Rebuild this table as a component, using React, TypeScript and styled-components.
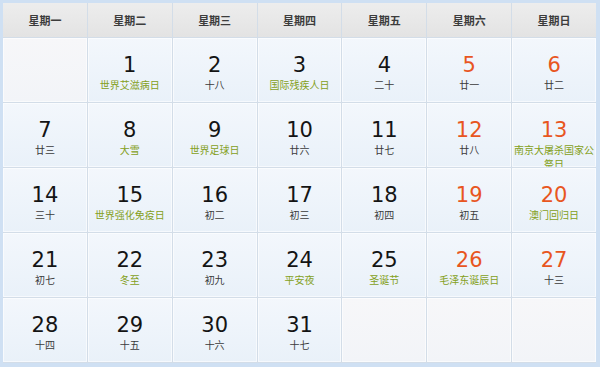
import styled, { createGlobalStyle } from 'styled-components';

const GlobalStyle = createGlobalStyle`
  html, body {
    margin: 0;
    padding: 0;
    background: #ffffff;
  }
  body {
    font-family: "Noto Sans CJK SC", "Noto Sans", sans-serif;
  }
`;

type Kind = 'lunar' | 'festival';

interface Day {
  n: number;
  text: string;
  kind: Kind;
}

const WEEKDAYS = ['星期一', '星期二', '星期三', '星期四', '星期五', '星期六', '星期日'];

const DAYS: (Day | null)[] = [
  null,
  { n: 1, text: '世界艾滋病日', kind: 'festival' },
  { n: 2, text: '十八', kind: 'lunar' },
  { n: 3, text: '国际残疾人日', kind: 'festival' },
  { n: 4, text: '二十', kind: 'lunar' },
  { n: 5, text: '廿一', kind: 'lunar' },
  { n: 6, text: '廿二', kind: 'lunar' },
  { n: 7, text: '廿三', kind: 'lunar' },
  { n: 8, text: '大雪', kind: 'festival' },
  { n: 9, text: '世界足球日', kind: 'festival' },
  { n: 10, text: '廿六', kind: 'lunar' },
  { n: 11, text: '廿七', kind: 'lunar' },
  { n: 12, text: '廿八', kind: 'lunar' },
  { n: 13, text: '南京大屠杀国家公祭日', kind: 'festival' },
  { n: 14, text: '三十', kind: 'lunar' },
  { n: 15, text: '世界强化免疫日', kind: 'festival' },
  { n: 16, text: '初二', kind: 'lunar' },
  { n: 17, text: '初三', kind: 'lunar' },
  { n: 18, text: '初四', kind: 'lunar' },
  { n: 19, text: '初五', kind: 'lunar' },
  { n: 20, text: '澳门回归日', kind: 'festival' },
  { n: 21, text: '初七', kind: 'lunar' },
  { n: 22, text: '冬至', kind: 'festival' },
  { n: 23, text: '初九', kind: 'lunar' },
  { n: 24, text: '平安夜', kind: 'festival' },
  { n: 25, text: '圣诞节', kind: 'festival' },
  { n: 26, text: '毛泽东诞辰日', kind: 'festival' },
  { n: 27, text: '十三', kind: 'lunar' },
  { n: 28, text: '十四', kind: 'lunar' },
  { n: 29, text: '十五', kind: 'lunar' },
  { n: 30, text: '十六', kind: 'lunar' },
  { n: 31, text: '十七', kind: 'lunar' },
  null,
  null,
  null,
];

const Frame = styled.div`
  width: 600px;
  height: 367px;
  box-sizing: border-box;
  padding: 3px 4px 4px 3px;
  background: #cfe0f3;
`;

const Grid = styled.div`
  display: grid;
  grid-template-columns: repeat(7, 1fr);
  grid-template-rows: 34px repeat(5, 64px);
  gap: 1px;
  height: 100%;
  background: #d3dde8;
`;

const HeadCell = styled.div`
  display: flex;
  align-items: center;
  justify-content: center;
  background: linear-gradient(#ededed, #e3e3e3);
  font-size: 11px;
  font-weight: bold;
  color: #3c3c3c;
`;

const DayCell = styled.div<{ $empty?: boolean }>`
  display: flex;
  flex-direction: column;
  align-items: center;
  padding-top: 15px;
  overflow: hidden;
  background: ${(p) =>
    p.$empty
      ? 'linear-gradient(#f7f7f9, #f2f4f8)'
      : 'linear-gradient(#f3f7fc, #e9f1f9)'};
  box-shadow: inset 0 0 0 1px rgba(255, 255, 255, 0.6);
`;

const Num = styled.div<{ $weekend: boolean }>`
  font-family: "DejaVu Sans", Verdana, sans-serif;
  font-size: 21px;
  line-height: 24px;
  color: ${(p) => (p.$weekend ? '#e8561f' : '#141414')};
`;

const Sub = styled.div<{ $kind: Kind }>`
  margin-top: 1px;
  padding: 0 1px;
  font-size: 10px;
  line-height: 14px;
  text-align: center;
  color: ${(p) => (p.$kind === 'festival' ? '#84a01a' : '#3a3a3a')};
`;

export default function App() {
  return (
    <>
      <GlobalStyle />
      <Frame>
        <Grid>
          {WEEKDAYS.map((w) => (
            <HeadCell key={w}>{w}</HeadCell>
          ))}
          {DAYS.map((d, i) =>
            d ? (
              <DayCell key={i}>
                <Num $weekend={i % 7 >= 5}>{d.n}</Num>
                <Sub $kind={d.kind}>{d.text}</Sub>
              </DayCell>
            ) : (
              <DayCell key={i} $empty />
            )
          )}
        </Grid>
      </Frame>
    </>
  );
}
